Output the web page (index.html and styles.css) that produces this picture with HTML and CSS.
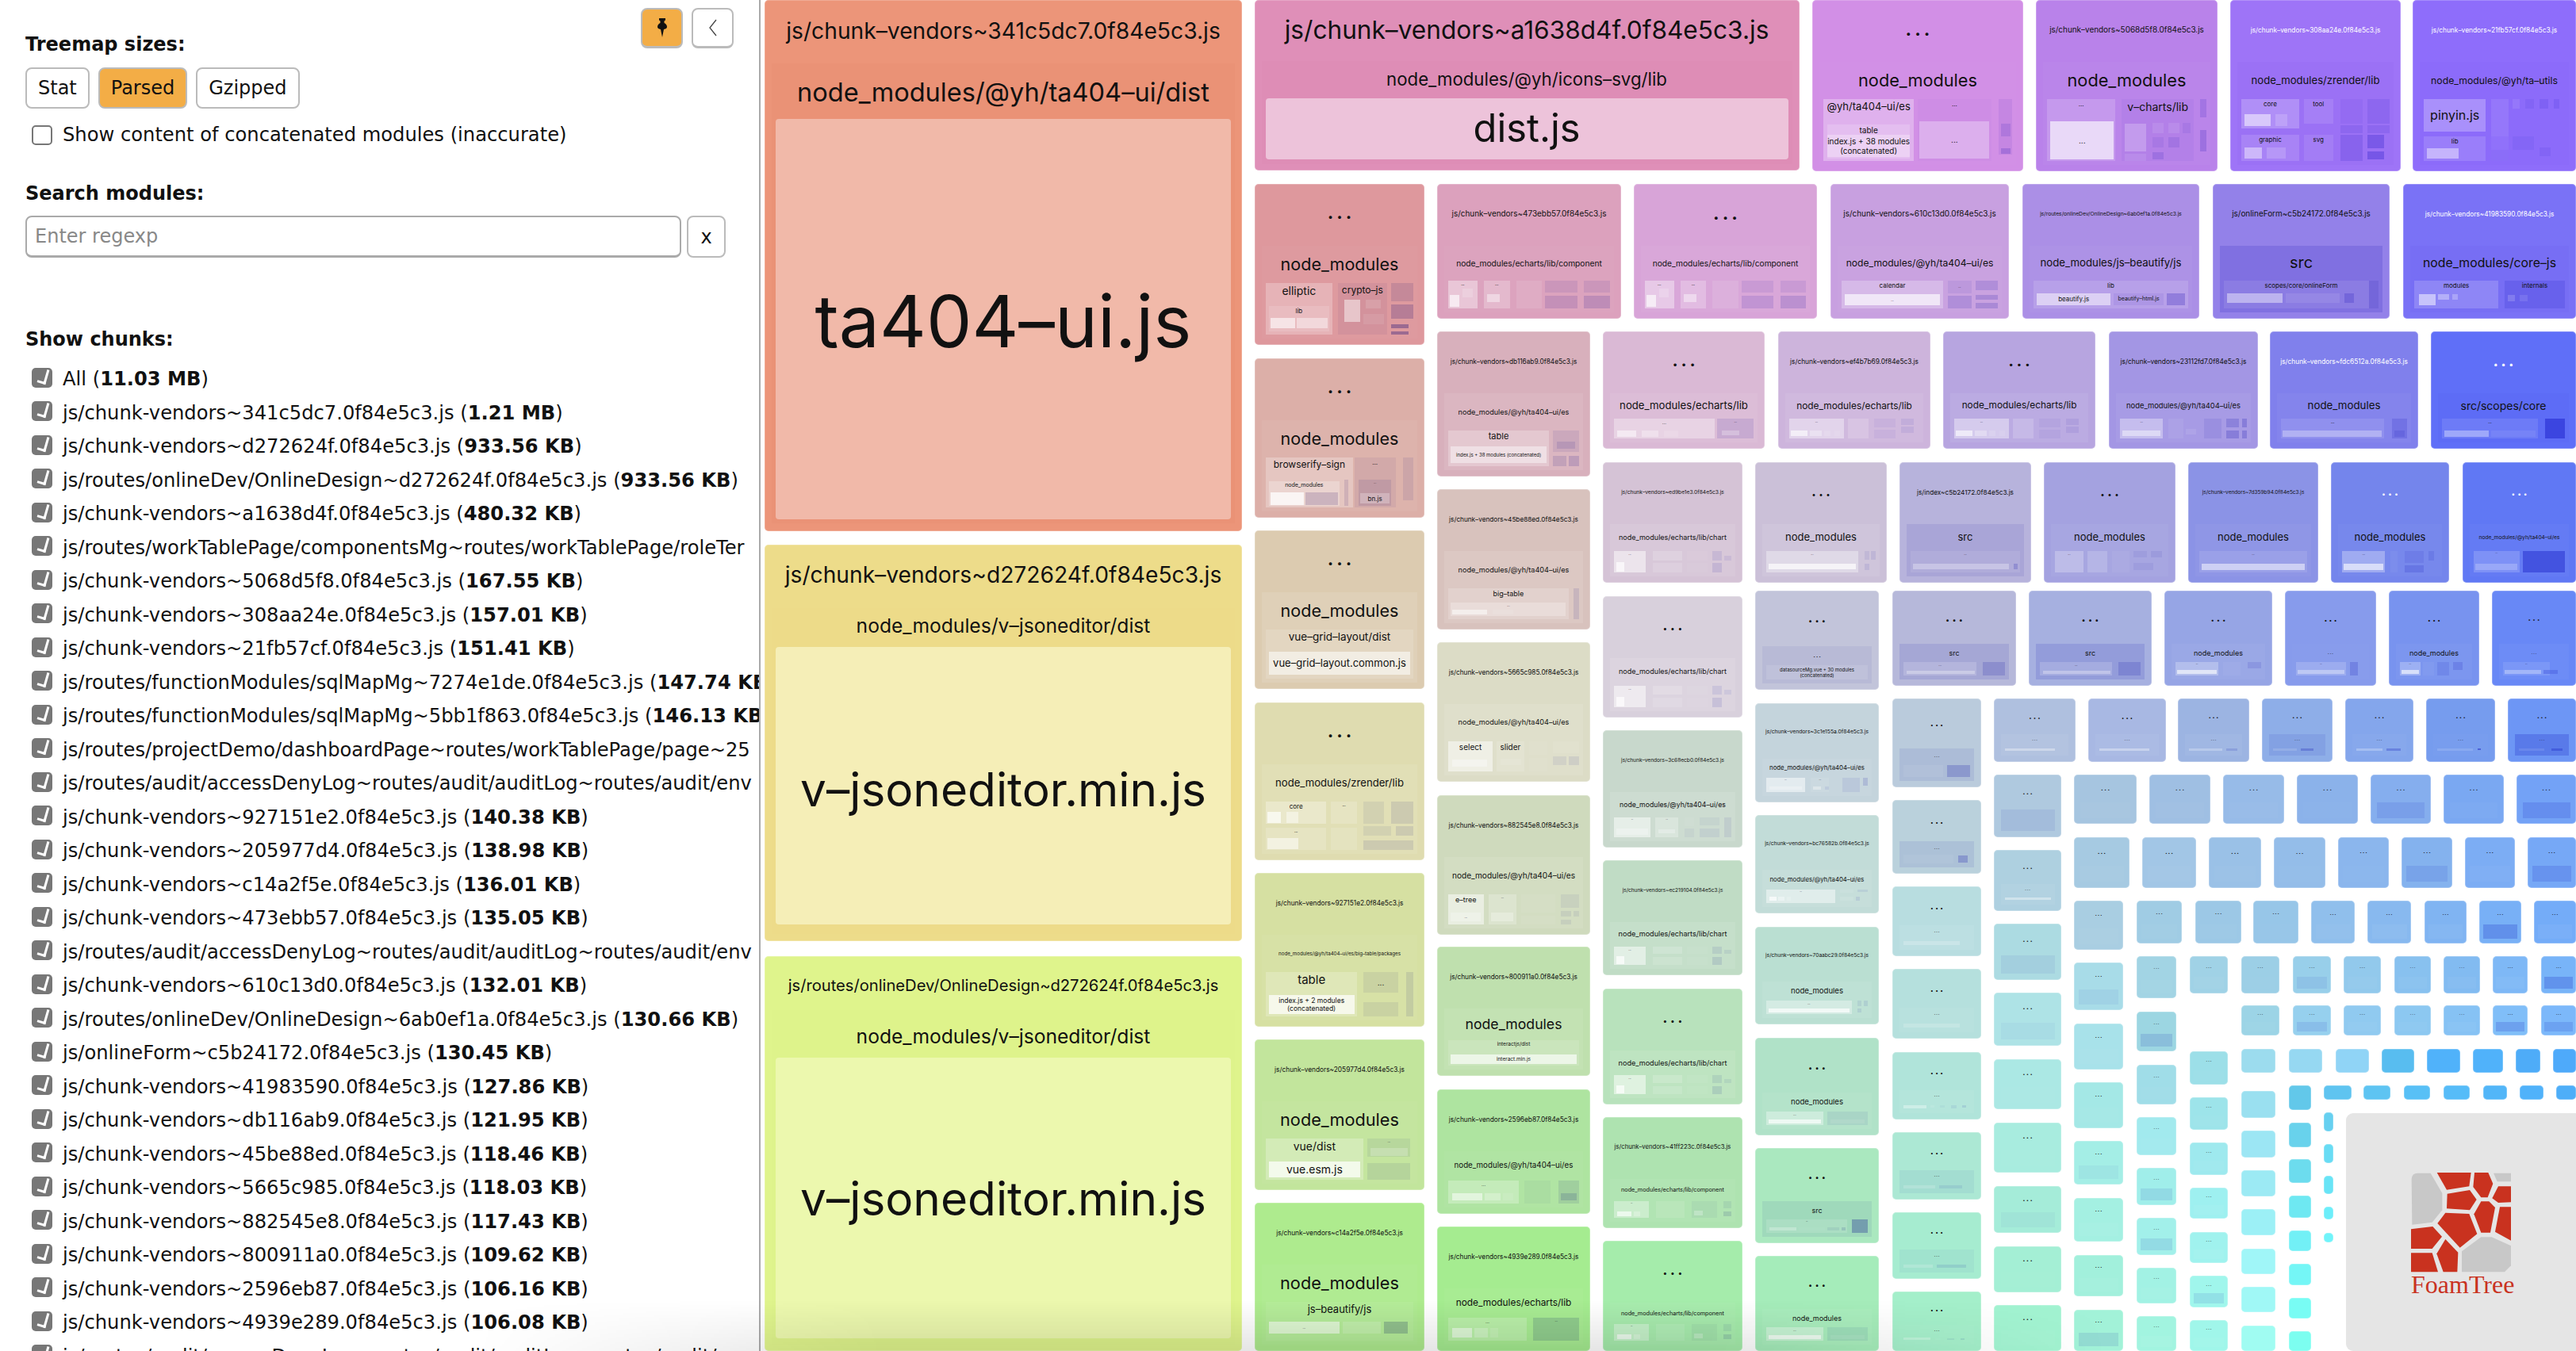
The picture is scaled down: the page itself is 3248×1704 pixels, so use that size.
FILE: index.html
```html
<!DOCTYPE html>
<html lang="en">
<head>
<meta charset="utf-8">
<title>Bundle treemap</title>
<link rel="stylesheet" href="styles.css">
</head>
<body>
<aside class="sidebar">
  <div class="pin-tools">
    <button class="tool active" aria-label="Pin">
      <svg width="18" height="26" viewBox="0 0 18 26"><path d="M5 1h8v2.500l-1.500 1V7c2 1 3.500 2.500 3.500 5 0 1.500-1.500 2.500-4 3l-2 10-2-10c-2.500-.5-4-1.500-4-3 0-2.500 1.500-4 3.500-5V4.500L5 3.500z" fill="#111"/></svg>
    </button>
    <button class="tool" aria-label="Collapse">
      <svg width="12" height="24" viewBox="0 0 12 24"><path d="M10 2 2 12l8 10" fill="none" stroke="#444" stroke-width="1.300"/></svg>
    </button>
  </div>
  <h2 class="heading first">Treemap sizes:</h2>
  <div class="switcher">
    <button class="pill">Stat</button>
    <button class="pill active">Parsed</button>
    <button class="pill">Gzipped</button>
  </div>
  <label class="concat"><input type="checkbox" class="check plain"><span>Show content of concatenated modules (inaccurate)</span></label>
  <h2 class="heading search-head">Search modules:</h2>
  <div class="search">
    <input class="search-input" type="text" placeholder="Enter regexp">
    <button class="clear">x</button>
  </div>
  <h2 class="heading chunks-head">Show chunks:</h2>
  <ul class="chunks">
    <li><label><input type="checkbox" class="check" checked><span>All (<b>11.03 MB</b>)</span></label></li>
    <li><label><input type="checkbox" class="check" checked><span>js/chunk-vendors~341c5dc7.0f84e5c3.js (<b>1.21 MB</b>)</span></label></li>
    <li><label><input type="checkbox" class="check" checked><span>js/chunk-vendors~d272624f.0f84e5c3.js (<b>933.56 KB</b>)</span></label></li>
    <li><label><input type="checkbox" class="check" checked><span>js/routes/onlineDev/OnlineDesign~d272624f.0f84e5c3.js (<b>933.56 KB</b>)</span></label></li>
    <li><label><input type="checkbox" class="check" checked><span>js/chunk-vendors~a1638d4f.0f84e5c3.js (<b>480.32 KB</b>)</span></label></li>
    <li><label><input type="checkbox" class="check" checked><span>js/routes/workTablePage/componentsMg~routes/workTablePage/roleTer</span></label></li>
    <li><label><input type="checkbox" class="check" checked><span>js/chunk-vendors~5068d5f8.0f84e5c3.js (<b>167.55 KB</b>)</span></label></li>
    <li><label><input type="checkbox" class="check" checked><span>js/chunk-vendors~308aa24e.0f84e5c3.js (<b>157.01 KB</b>)</span></label></li>
    <li><label><input type="checkbox" class="check" checked><span>js/chunk-vendors~21fb57cf.0f84e5c3.js (<b>151.41 KB</b>)</span></label></li>
    <li><label><input type="checkbox" class="check" checked><span>js/routes/functionModules/sqlMapMg~7274e1de.0f84e5c3.js (<b>147.74 KB</b>)</span></label></li>
    <li><label><input type="checkbox" class="check" checked><span>js/routes/functionModules/sqlMapMg~5bb1f863.0f84e5c3.js (<b>146.13 KB</b>)</span></label></li>
    <li><label><input type="checkbox" class="check" checked><span>js/routes/projectDemo/dashboardPage~routes/workTablePage/page~25</span></label></li>
    <li><label><input type="checkbox" class="check" checked><span>js/routes/audit/accessDenyLog~routes/audit/auditLog~routes/audit/env</span></label></li>
    <li><label><input type="checkbox" class="check" checked><span>js/chunk-vendors~927151e2.0f84e5c3.js (<b>140.38 KB</b>)</span></label></li>
    <li><label><input type="checkbox" class="check" checked><span>js/chunk-vendors~205977d4.0f84e5c3.js (<b>138.98 KB</b>)</span></label></li>
    <li><label><input type="checkbox" class="check" checked><span>js/chunk-vendors~c14a2f5e.0f84e5c3.js (<b>136.01 KB</b>)</span></label></li>
    <li><label><input type="checkbox" class="check" checked><span>js/chunk-vendors~473ebb57.0f84e5c3.js (<b>135.05 KB</b>)</span></label></li>
    <li><label><input type="checkbox" class="check" checked><span>js/routes/audit/accessDenyLog~routes/audit/auditLog~routes/audit/env</span></label></li>
    <li><label><input type="checkbox" class="check" checked><span>js/chunk-vendors~610c13d0.0f84e5c3.js (<b>132.01 KB</b>)</span></label></li>
    <li><label><input type="checkbox" class="check" checked><span>js/routes/onlineDev/OnlineDesign~6ab0ef1a.0f84e5c3.js (<b>130.66 KB</b>)</span></label></li>
    <li><label><input type="checkbox" class="check" checked><span>js/onlineForm~c5b24172.0f84e5c3.js (<b>130.45 KB</b>)</span></label></li>
    <li><label><input type="checkbox" class="check" checked><span>js/chunk-vendors~41983590.0f84e5c3.js (<b>127.86 KB</b>)</span></label></li>
    <li><label><input type="checkbox" class="check" checked><span>js/chunk-vendors~db116ab9.0f84e5c3.js (<b>121.95 KB</b>)</span></label></li>
    <li><label><input type="checkbox" class="check" checked><span>js/chunk-vendors~45be88ed.0f84e5c3.js (<b>118.46 KB</b>)</span></label></li>
    <li><label><input type="checkbox" class="check" checked><span>js/chunk-vendors~5665c985.0f84e5c3.js (<b>118.03 KB</b>)</span></label></li>
    <li><label><input type="checkbox" class="check" checked><span>js/chunk-vendors~882545e8.0f84e5c3.js (<b>117.43 KB</b>)</span></label></li>
    <li><label><input type="checkbox" class="check" checked><span>js/chunk-vendors~800911a0.0f84e5c3.js (<b>109.62 KB</b>)</span></label></li>
    <li><label><input type="checkbox" class="check" checked><span>js/chunk-vendors~2596eb87.0f84e5c3.js (<b>106.16 KB</b>)</span></label></li>
    <li><label><input type="checkbox" class="check" checked><span>js/chunk-vendors~4939e289.0f84e5c3.js (<b>106.08 KB</b>)</span></label></li>
    <li><label><input type="checkbox" class="check" checked><span>js/routes/audit/accessDenyLog~routes/audit/auditLog~routes/audit/</span></label></li>
  </ul>
</aside>
<main class="map" id="map">
  <div class="brand">
    <svg class="brand-logo" width="126" height="126" viewBox="360 238 378 378">
      <g class="foam-gray"><path d="M362 262q2-22 22-22h50l44 76v64l-38 46-76 9z"/><path d="M672 240h66v32h-52z"/><path d="M552 536l73-54h40l73 33v75l-24 24H552z"/></g>
      <g class="foam-red"><path d="M458 238h129l-7 52-85 13z"/><path d="M600 238h52l18 42-20 52h-25l-30-40z"/><path d="M690 290h48v60l-48 2-23-17z"/><path d="M497 318l85-14 26 36-26 40-87-6z"/><path d="M625 347h30l23 23-18 95h-35l-27-70z"/><path d="M696 368h42v127l-60-33z"/><path d="M490 390l90 4 30 76-65 52-85-92z"/><path d="M360 452l82-10 35 38-37 46h-80z"/><path d="M360 542h80l22 72H360z"/><path d="M490 490l48 50-3 74h-53l-25-69z"/></g>
    </svg>
    <span class="brand-name">FoamTree</span>
  </div>
</main>
<div class="page-fade"></div>
<script src="app.js"></script>
</body>
</html>
```
FILE: styles.css
```css
* { box-sizing: border-box; }
html, body { margin: 0; height: 1704px; overflow: hidden; background: #fff; }
body { display: flex; }

.sidebar {
  position: relative;
  flex: 0 0 959px;
  height: 1704px;
  padding: 0 0 0 32px;
  overflow: hidden;
  border-right: 2px solid #aaa;
  font-family: "DejaVu Sans", Verdana, sans-serif;
  font-size: 24.2px;
  color: #111;
}
.pin-tools { position: absolute; top: 10px; left: 808px; display: flex; gap: 11px; }
.tool {
  width: 53px; height: 51px; padding: 0;
  display: flex; align-items: center; justify-content: center;
  background: #fff; border: 2px solid #bbb; border-bottom-width: 3px; border-radius: 8px;
}
.tool.active { background: #f3ad46; }

.heading { margin: 0; font-size: 24px; line-height: 30px; font-weight: 700; }
.heading.first { margin-top: 41px; }
.search-head { margin-top: 42px; }
.chunks-head { margin-top: 88px; }

.switcher { display: flex; gap: 11px; margin-top: 14px; }
.pill {
  height: 52px; padding: 0 14px;
  font: 24px "DejaVu Sans", Verdana, sans-serif; color: #111;
  background: #fff; border: 2px solid #bbb; border-radius: 8px;
}
.pill.active { background: #f3ad46; }

.concat { display: flex; align-items: center; gap: 13px; height: 34px; margin: 16px 0 0 8px; white-space: nowrap; }

.check {
  position: relative; flex: none; width: 26px; height: 25px; margin: 0 0 4px;
  appearance: none; background: #777; border-radius: 5px;
}
.check:checked::after {
  content: ""; position: absolute; left: 9px; top: 1px; width: 8px; height: 16px;
  border: solid #fff; border-width: 0 3px 3px 0; transform: rotate(16deg);
}
.check.plain { background: #fff; border: 2px solid #777; margin: 0; }

.search { display: flex; gap: 7px; margin-top: 13px; }
.search-input {
  width: 827px; height: 53px; padding: 0 10px;
  font: 24px "DejaVu Sans", Verdana, sans-serif;
  border: 2px solid #aaa; border-bottom-width: 3px; border-radius: 8px; outline: none;
}
.search-input::placeholder { color: #888; }
.clear {
  width: 49px; height: 53px; padding: 0;
  font: 24px "DejaVu Sans", Verdana, sans-serif; color: #111;
  background: #fff; border: 2px solid #bbb; border-radius: 8px;
}

.chunks { list-style: none; margin: 14px 0 0; padding: 0 0 0 8px; }
.chunks li { height: 42.5px; white-space: nowrap; }
.chunks label { display: flex; align-items: center; gap: 13px; height: 100%; }

.map { position: relative; flex: 1; height: 1704px; overflow: hidden; font-family: Inter, "Liberation Sans", sans-serif; color: #111; }
.box { position: absolute; display: flex; align-items: center; justify-content: center; text-align: center; line-height: 1.25; white-space: pre-line; }
.box.top { align-items: flex-start; padding-top: 1px; }
.tile { border-radius: 5px; box-shadow: inset 0 0 0 1px rgba(255, 255, 255, .22); }
.leaf { border-radius: 4px; }
.lbl { position: absolute; white-space: nowrap; line-height: 1; transform: translate(-50%, -50%); }
.dots { font-weight: 900; letter-spacing: .24em; padding-left: .24em; }
.white { color: #fff; }

.brand {
  position: absolute; left: 1999px; top: 1404px; width: 290px; height: 300px;
  z-index: 5;
  display: flex; flex-direction: column; align-items: center; justify-content: center;
  padding-top: 6px;
  background: #e5e5e5; border-radius: 9px 0 0 9px;
}
.brand-logo { display: block; }
.brand-name { font: 32px/30px "Liberation Serif", serif; color: #c9321f; width: 126px; text-align: center; white-space: nowrap; }
.foam-gray { fill: #c8c8c8; }
.foam-red { fill: #c9321f; }

.page-fade {
  position: absolute; left: 600px; top: 1640px; width: 2060px; height: 64px;
  pointer-events: none;
  background: linear-gradient(to bottom, rgba(0,0,0,0), rgba(0,0,0,.1));
  -webkit-mask-image: linear-gradient(to right, transparent, #000 25%, #000 75%, transparent);
  mask-image: linear-gradient(to right, transparent, #000 25%, #000 75%, transparent);
}
```
FILE: app.js
```js
const map = document.getElementById('map');
const OX = 959;
const ctx = document.createElement('canvas').getContext('2d');
ctx.font = '100px Inter';
const fitSize = (s, w) => w / ctx.measureText(s).width * 100;

function rgb(c) { return [1, 3, 5].map(i => parseInt(c.substr(i, 2), 16)); }
function lum(c) {
  const [r, g, b] = rgb(c).map(v => { v /= 255; return v <= .04045 ? v / 12.92 : Math.pow((v + .055) / 1.055, 2.4); });
  return .2126 * r + .7152 * g + .0722 * b;
}
function shade(color, a) {
  if (a >= 0) return `rgba(255,255,255,${a * .85})`;
  const [r, g, b] = rgb(color);
  return `rgba(${r * .62 | 0},${g * .62 | 0},${b * .9 | 0},${Math.min(1, -a * 1.6)})`;
}
function box(x1, y1, x2, y2, bg, text, fs, cls) {
  const el = document.createElement('div');
  el.className = 'box ' + (cls || '');
  el.style.cssText = `left:${x1 - OX}px;top:${y1}px;width:${x2 - x1}px;height:${y2 - y1}px;background:${bg};` + (fs ? `font-size:${fs}px;` : '');
  if (text) el.textContent = text;
  map.appendChild(el);
  return el;
}
function label(cx, cy, text, fs, cls) {
  const el = document.createElement('div');
  el.className = 'lbl ' + (cls || '');
  el.style.cssText = `left:${cx - OX}px;top:${cy}px;font-size:${fs}px;`;
  el.textContent = text;
  map.appendChild(el);
}
function fitLabel(cx, cy, text, w, cls) { label(cx, cy, text, fitSize(text, w), cls); }

function tile(x1, y1, x2, y2, color, title, tw, sub, sw, ga, kids) {
  const w = x2 - x1, h = y2 - y1, cx = (x1 + x2) / 2;
  box(x1, y1, x2, y2, color, '', 0, 'tile');
  const light = lum(color) < .268;
  const titleY = y1 + Math.min(38, .29 * h);
  const dotFs = w * .088;
  if (title) fitLabel(cx, titleY, title, tw, light ? 'white' : '');
  else label(cx, titleY, '...', Math.min(dotFs, 19), 'dots' + (light ? ' white' : ''));
  const inset = Math.min(9, w * .1);
  const gTop = y1 + Math.min(78, .56 * h);
  const gBot = y2 - Math.min(8, .12 * h);
  box(x1 + inset, gTop, x2 - inset, gBot, shade(color, ga === undefined ? .05 : ga), '', 0);
  const kTop = gTop + Math.min(47, .52 * (gBot - gTop));
  const subY = gTop + (kTop - gTop) / 2;
  if (sub) fitLabel(cx, subY, sub, sw);
  else if (kids && h > 60) label(cx, subY, '...', Math.max(4, dotFs * .42), 'dots');
  if (kids) {
    const kx = x1 + inset + 5, kw = w - 2 * inset - 10, kb = gBot - 5, kh = kb - kTop;
    kids.forEach(([l, t, r, b, a, text, fs, top]) => {
      box(kx + kw * l / 100, kTop + kh * t / 100, kx + kw * r / 100, kTop + kh * b / 100, shade(color, a), text || '', fs, top ? 'top' : '');
    });
  }
}

const C = 'js/chunk–vendors~', H = '.0f84e5c3.js';
const NM = 'node_modules', UI = 'node_modules/@yh/ta404–ui/es', EL = 'node_modules/echarts/lib';
const P = {
  comp: [[0,0,18,100,.45,'...',5,1],[1,52,7,95,.75],[9,30,15,60,.2],[22,0,38,100,.28,'...',5,1],[24,50,32,78,.5],[42,0,58,100,.12],[60,0,80,42,-.12],[84,0,100,42,-.12],[60,56,80,100,-.18],[84,56,100,100,-.22]],
  chart: [[0,0,27,100,.6,'...',4,1],[2,52,9,95,.8],[33,0,58,42,.2],[33,56,58,100,.15],[62,0,80,42,.06],[62,56,80,100,.05],[84,0,92,42,-.12],[84,56,92,100,-.15],[94,20,100,42,-.1]],
  lib: [[0,0,42,100,.45,'...',4,1],[1,58,14,86,.7],[16,58,25,86,.35],[27,58,32,86,.15],[35,58,39,86,.1],[45,0,61,100,.2],[65,0,82,42,-.06],[65,56,82,100,-.06],[86,0,96,30,-.1],[86,40,96,70,-.1]],
  bar: [[0,0,74,100,.35,'...',4,1],[2,58,72,90,.7],[79,0,98,100,-.25]],
  bar2: [[0,0,56,100,.4,'...',4,1],[2,60,54,88,.78],[60,0,100,100,-.1],[63,60,97,86,.1]],
  wide: [[0,0,84,100,.4,'...',4,1],[2,58,82,86,.8],[90,0,94,40,-.1],[96,0,100,40,-.12],[90,60,94,90,-.12]],
  src: [[0,0,72,100,.2,'...',4,1],[3,62,70,85,.35],[78,0,100,100,-.3]],
  few: [[0,0,52,100,.3,'...',4,1],[3,58,30,90,.5],[32,58,50,90,.2],[58,0,78,100,-.06],[84,0,100,100,-.2]]
};

[
  // row 1
  [2285,0,2551,216,'#d28fe6',null,0,NM,150,.02,[[0,0,48,100,.35,'@yh/ta404–ui/es',13,1],[2,41,46,96,.2,'table',10,1],[2,58,46,94,.35,'index.js + 38 modules\n(concatenated)',10],[50,0,89,100,-.03,'...',8,1],[51,36,88,96,.35,'...',10],[93,0,100,90,-.1],[94,40,99,60,-.2],[94,80,99,88,-.3]]],
  [2567,0,2796,216,'#b982ea',C+'5068d5f8'+H,195,NM,150,.03,[[0,0,43,100,.2,'...',8,1],[2,36,42,98,.74,'...',10],[47,0,92,100,-.06,'v–charts/lib',14,1],[49,40,62,85,.25],[66,38,73,55,.1],[76,38,83,55,.1],[85,38,90,55,-.1],[66,62,73,78,-.1],[76,62,83,78,-.15],[49,88,62,100,.1],[66,86,73,98,-.2],[96,0,100,30,-.2],[96,50,100,85,-.25]]],
  [2812,0,3027,216,'#9e74f7',C+'308aa24e'+H,164,'node_modules/zrender/lib',162,-.03,[[0,0,39,48,.25,'core',8,1],[2,24,20,44,.6],[23,24,31,44,.2],[0,58,39,100,.15,'graphic',8,1],[2,78,14,96,.5],[17,78,30,96,.2],[42,0,62,40,.12,'tool',8,1],[42,58,62,100,.1,'svg',8,1],[67,0,82,40,-.08],[85,0,100,40,-.15],[67,42,82,55,-.15],[85,42,100,55,-.15],[67,58,82,100,-.2],[85,58,96,80,-.35],[85,85,96,98,-.4]]],
  [3042,0,3248,216,'#8e6dfb',C+'21fb57cf'+H,159,'node_modules/@yh/ta–utils',160,-.02,[[0,0,44,52,.3,'pinyin.js',16],[0,60,44,100,.15,'lib',8,1],[2,80,25,96,.5],[48,0,60,60,.1],[63,0,68,15,.1],[72,0,78,15,-.1],[82,0,88,15,-.15],[92,0,96,15,-.15],[48,60,60,100,.05],[63,60,78,82,-.08],[82,78,90,92,-.1],[48,82,60,100,-.05]]],
  // row 2
  [1812,232,2044,402,'#dca1bd',C+'473ebb57'+H,195,EL+'/component',184,.03,P.comp],
  [2060,232,2291,402,'#d8a4d8',null,0,EL+'/component',184,.04,P.comp],
  [2308,232,2533,402,'#c8a0e0',C+'610c13d0'+H,193,UI,186,.03,[[0,0,65,100,.3,'calendar',8,1],[2,50,63,88,.75,'...',4],[68,0,83,45,-.1,'...',4],[68,55,83,100,-.2],[86,0,100,35,-.2],[86,52,100,70,-.25],[86,80,100,100,-.25]]],
  [2550,232,2773,402,'#ab8fe6','js/routes/onlineDev/OnlineDesign~6ab0ef1a'+H,179,'node_modules/js–beautify/js',178,.03,[[0,0,100,100,.15,'lib',8,1],[2,45,50,88,.6,'beautify.js',8],[52,45,84,88,-.08,'beautify–html.js',7],[86,45,98,88,-.3]]],
  [2790,232,3013,402,'#9381e9','js/onlineForm~c5b24172'+H,175,'src',29,-.2,[[0,0,100,100,.1,'scopes/core/onlineForm',8,1],[2,45,38,80,.5],[40,45,75,80,.1],[78,45,84,80,-.3],[94,0,100,100,-.3]]],
  [3030,232,3248,402,'#7a72f6',C+'41983590'+H,163,'node_modules/core–js',168,-.04,[[0,0,56,100,.2,'modules',8,1],[3,50,14,90,.6],[16,50,23,70,.4],[25,50,29,70,.3],[60,0,100,100,-.2,'internals',8,1],[62,52,67,75,.2],[70,52,75,75,.12]]],
  // col A below
  [1582,232,1796,435,'#de989d',null,0,NM,149,.03,[[0,0,45,100,.3,'elliptic',14,1],[2,44,43,94,.15,'lib',8,1],[3,68,20,88,.7],[21,68,42,88,.5],[49,0,82,100,-.08,'crypto–js',12,1],[53,32,64,76,.55],[68,32,78,50,.15],[66,60,80,80,.1],[85,0,100,35,-.18],[85,42,100,70,-.3],[85,80,97,88,-.5],[85,94,97,100,-.5]]],
  [1582,452,1796,653,'#dcafa8',null,0,NM,149,.06,[[0,0,59,100,.3,'browserify–sign',12,1],[2,47,50,97,.3,'node_modules',7,1],[3,70,26,95,.9],[27,70,49,95,-.2],[53,45,56,97,-.15],[60,0,88,100,-.08,'...',8,1],[63,45,85,97,-.15,'...',4,1],[64,72,84,92,.3,'bn.js',8],[93,0,100,85,-.12]]],
  [1582,669,1796,869,'#dccbb0',null,0,NM,149,.12,[[0,0,100,100,.15,'vue–grid–layout/dist',13.500,1],[2,45,98,92,.65,'vue–grid–layout.common.js',13]]],
  [1582,886,1796,1085,'#dfdcb0',null,0,'node_modules/zrender/lib',162,.1,[[0,0,41,46,.35,'core',8,1],[1,22,10,44,.8],[14,22,22,44,.5],[44,0,62,46,.2,'...',5,1],[66,0,80,46,-.1],[85,0,100,46,-.15],[0,54,41,100,.2,'...',5,1],[1,75,22,98,.6],[44,54,62,100,.15],[66,50,85,70,-.1],[88,50,100,70,-.15],[66,80,100,100,-.15]]],
  [1582,1101,1796,1295,'#d6e0a2',C+'927151e2'+H,161,'node_modules/@yh/ta404–ui/es/big–table/packages',154,.05,[[0,0,62,100,.25,'table',15,1],[2,52,60,95,.85,'index.js + 2 modules\n(concatenated)',8.500],[66,0,90,47,-.1,'...',10],[66,67,90,100,-.1],[95,0,100,100,-.15]]],
  [1582,1311,1796,1501,'#c2e59c',C+'205977d4'+H,164,NM,150,.04,[[0,0,66,100,.3,'vue/dist',14,1],[2,55,64,95,.85,'vue.esm.js',14],[69,0,98,45,-.1,'...',4,1],[71,24,96,42,.25],[69,60,98,100,-.12]]],
  [1582,1517,1796,1704,'#aeeb8e',C+'c14a2f5e'+H,160,NM,150,.04,[[0,0,100,100,.08,'js–beautify/js',13,1],[2,50,50,82,.65,'...',4],[52,50,78,82,.2],[80,50,96,82,-.3]]],
  // col B below
  [1812,418,2005,601,'#d8b0bc',C+'db116ab9'+H,160,UI,140,.1,[[0,0,77,100,.3,'table',11,1],[2,45,75,90,.5,'index.js + 38 modules (concatenated)',6],[80,0,100,60,-.12],[83,30,97,50,-.18],[80,70,90,100,-.18],[92,70,100,100,-.22]]],
  [1812,617,2005,794,'#d8c2bd',C+'45be88ed'+H,163,UI,140,.12,[[0,0,92,100,.2,'big–table',9,1],[2,45,90,90,.3,'...',4,1],[3,68,30,84,.6],[34,68,50,84,.1],[96,0,100,100,-.15]]],
  [1812,810,2005,986,'#dcdcc6',C+'5665c985'+H,164,UI,140,.12,[[0,0,34,100,.6,'select',10,1],[3,60,30,85,.4],[37,0,58,100,.15,'slider',10,1],[40,58,56,80,.1],[62,0,76,45,.06],[62,55,76,100,.05],[80,0,100,40,.08],[80,50,90,80,-.1],[92,50,100,80,-.12]]],
  [1812,1003,2005,1179,'#cfdabd',C+'882545e8'+H,164,UI,155,.1,[[0,0,27,100,.6,'e–tree',9,1],[2,60,25,90,.3,'...',4],[31,0,52,100,.25,'...',4,1],[33,60,50,90,.3],[56,0,82,60,.06],[56,72,82,100,.06],[86,0,100,45,-.08],[86,55,94,75,-.1],[96,55,100,75,-.1],[86,85,94,100,-.1]]],
  [1812,1194,2005,1357,'#bfe0ae',C+'800911a0'+H,161,NM,122,.08,[[0,0,100,100,.15,'interactjs/dist',6.500,1],[2,55,98,95,.75,'interact.min.js',6.500]]],
  [1812,1374,2005,1531,'#aee4a0',C+'2596eb87'+H,164,UI,150,.04,[[0,0,54,100,.3,'...',6,1],[3,55,26,85,.6],[28,55,40,85,.3],[42,55,50,85,.1],[58,0,78,100,-.05],[84,0,100,100,-.15],[86,55,98,85,-.25]]],
  [1812,1547,2005,1704,'#a5ec90',C+'4939e289'+H,164,EL,146,.04,[[0,0,60,100,.25,'...',6,1],[3,45,18,85,.6],[20,45,30,85,.3],[32,45,38,85,.15],[65,0,100,100,-.22,'...',4,1]]],
  // row 3
  [2021,418,2225,566,'#dab9d5',null,0,EL,162,.08,[[0,0,72,100,.4,'...',6,1],[2,60,16,90,.6],[20,60,32,90,.35],[36,60,46,90,.15],[74,0,100,100,-.15,'...',4,1],[77,60,90,85,.3]]],
  [2242,418,2434,566,'#cdb4dc',C+'ef4b7b69'+H,162,EL,146,.08,P.lib],
  [2450,418,2642,566,'#b7a5e0',null,0,EL,145,.08,P.lib],
  [2659,418,2847,566,'#a396e4',C+'23112fd7'+H,159,UI,144,.06,[[0,0,34,100,.4,'...',4,1],[2,60,32,88,.5],[38,0,50,100,.08],[52,50,60,80,.1],[66,0,80,100,-.12],[84,0,94,45,-.25],[96,0,100,45,-.3],[84,60,94,100,-.3],[96,60,100,100,-.3]]],
  [2862,418,3049,566,'#8080ec',C+'fdc6512a'+H,161,NM,92,.04,[[0,0,82,100,.12,'...',5,1],[1,60,80,92,.35],[88,0,100,100,-.2],[90,58,98,92,-.2]]],
  [3065,418,3248,566,'#5f6ff8',null,0,'src/scopes/core',108,-.04,[[0,0,78,100,.12,'...',5,1],[2,60,38,90,.4],[40,60,76,90,.08],[84,0,100,100,-.6]]],
  // row 4 starting at x 2021
  [2021,583,2197,735,'#d5c3d6',C+'ed9be1e3'+H,130,EL+'/chart',136,.1,P.chart],
  [2213,583,2379,735,'#cbc0d8',null,0,NM,90,.1,P.wide],
  [2395,583,2561,735,'#b7b3dc','js/index~c5b24172'+H,122,'src',19,-.12,[[0,0,100,100,.1,'...',4,1],[2,58,90,85,.35],[94,58,98,85,-.3]]],
  [2577,583,2743,735,'#a4a2e0',null,0,NM,90,.05,[[0,0,26,100,.3,'...',4,1],[30,0,48,100,.2],[52,0,68,100,.06],[72,0,84,30,-.08],[88,0,98,30,-.1],[72,55,90,90,-.08]]],
  [2759,583,2923,735,'#8b93e6',C+'7d359b94'+H,129,NM,90,.04,[[0,0,100,100,.12,'...',4,1],[2,58,98,88,.6]]],
  [2939,583,3088,735,'#7485ec',null,0,NM,90,.03,[[0,0,45,100,.35,'...',4,1],[2,60,43,90,.7],[50,0,58,100,.05],[65,0,85,55,-.12],[90,0,96,45,-.15],[65,65,85,100,-.2]]],
  [3105,583,3248,735,'#6078f4',null,0,'node_modules/@yh/ta404–ui/es',102,.03,[[0,0,50,100,.2,'...',3,1],[2,58,48,88,.25],[54,0,100,100,-.5]]],
  // col 3 below
  [2021,752,2197,905,'#d8d0dc',null,0,EL+'/chart',136,.12,P.chart],
  [2021,921,2197,1069,'#c8d8cc',C+'3c68ecb0'+H,130,UI,134,.12,[[0,0,31,100,.6,'...',3,1],[2,55,29,88,.3],[35,0,55,100,.3,'...',3,1],[38,60,52,80,.3],[60,0,68,45,.06],[60,55,68,100,-.05],[73,0,90,40,-.06],[73,55,90,100,-.08],[94,0,100,100,-.1]]],
  [2021,1085,2197,1230,'#c0dcc5',C+'ec219104'+H,127,EL+'/chart',137,.1,P.chart],
  [2021,1247,2197,1393,'#b8e2bc',null,0,EL+'/chart',137,.1,P.chart],
  [2021,1409,2197,1549,'#aee3b0',C+'41ff223c'+H,147,EL+'/component',130,.05,[[0,0,30,100,.4,'...',3,1],[3,60,15,90,.75],[17,60,22,90,.3],[36,0,60,100,.12],[66,0,88,100,-.06],[68,55,76,85,.3],[93,0,100,42,-.1],[93,60,100,90,-.18]]],
  [2021,1565,2197,1704,'#a5ecab',null,0,EL+'/component',130,.05,[[0,0,30,100,.4,'...',3,1],[3,60,15,90,.75],[17,60,22,90,.3],[36,0,60,100,.12],[66,0,88,100,-.06],[68,55,76,85,.3],[93,0,100,42,-.1],[93,60,100,90,-.18]]],
  // col 4 (2213)
  [2213,887,2369,1012,'#c4d4dc',C+'3c1e155a'+H,130,UI,120,.08,[[0,0,38,100,.6,'...',3,1],[3,60,35,85,.3],[44,0,62,100,.1,'...',3,1],[46,60,54,85,.4],[58,60,62,85,-.1],[75,0,92,100,-.1],[95,0,100,55,-.2]]],
  [2213,1028,2369,1152,'#c2dcd8',C+'bc76582b'+H,132,UI,119,.08,[[0,0,68,100,.55,'...',3,1],[3,55,10,85,.8],[12,55,18,85,.4],[20,55,24,85,.2],[73,55,86,85,.12],[73,0,86,25,.1],[90,0,100,20,-.1],[88,55,92,85,-.12]]],
  [2213,1169,2369,1292,'#badfd2',C+'70aabc29'+H,130,NM,66,.08,P.wide],
  [2213,1309,2369,1432,'#b0e2c8',null,0,NM,66,.06,P.bar2],
  [2213,1448,2369,1568,'#aae8bf',null,0,'src',13,-.1,[[0,0,80,100,.15,'...',3,1],[3,58,30,82,.3],[32,58,58,82,.04],[60,58,72,82,-.1],[74,58,78,82,-.2],[84,0,100,100,-.5]]],
  [2213,1584,2369,1704,'#a5ecba',null,0,NM,62,.06,P.bar2],
  // row 5
  [2386,745,2542,865,'#b6b8da',null,0,'src',13,-.15,P.src],
  [2558,745,2713,865,'#a6b0e0',null,0,'src',13,-.18,P.src],
  [2729,745,2865,865,'#96a5e5',null,0,NM,62,.05,[[0,0,50,100,.3,'...',3,1],[2,58,48,88,.7],[56,0,76,100,.05],[84,0,100,45,-.15]]],
  [2881,745,2996,865,'#879bec',null,0,null,0,.02,[[0,0,72,100,.2,'...',3,1],[2,58,70,88,.4],[78,0,90,100,-.25]]],
  [3012,745,3126,865,'#7893ef',null,0,NM,62,.04,[[0,0,30,100,.3,'...',3,1],[2,60,28,90,.7],[34,0,50,100,.05],[55,0,72,100,-.15],[78,0,92,55,-.2]]],
  [3142,745,3248,865,'#6888f6',null,0,null,0,.04,[[0,0,75,100,.12,'...',3,1],[2,58,62,85,.35],[66,58,88,85,-.25]]],
  // datasource
  [2213,745,2369,870,'#c2c4da',null,0,null,0,-.08,[[0,0,100,100,.12,'datasourceMg.vue + 30 modules\n(concatenated)',6]]]
].forEach(d => tile(...d));

// rows and columns of small tiles: [a, b, colour, group alpha, kids]
function row(y1, y2, list) { list.forEach(([a, b, c, g, k]) => tile(a, y1, b, y2, c, null, 0, null, 0, g, k)); }
function col(x1, x2, list) { list.forEach(([a, b, c, g, k]) => tile(x1, a, x2, b, c, null, 0, null, 0, g, k)); }

col(2386, 2498, [
  [881, 993, '#bacbdc', -.12, [[0,0,60,100,.08],[66,0,100,100,-.35]]],
  [1009, 1102, '#bad1dc', -.12, [[0,0,75,100,.06],[82,10,96,90,-.4]]],
  [1118, 1206, '#b8dde0', .08, [[0,40,84,90,.25]]],
  [1222, 1310, '#b5e0dd', .06, [[0,40,84,90,.2]]],
  [1327, 1412, '#b0e4da', .06, [[0,45,34,90,.4],[40,50,46,80,.1],[55,50,62,80,-.05],[72,45,80,90,-.1],[88,45,94,80,-.15]]],
  [1428, 1513, '#ace8d4', -.08, [[0,40,48,85,.2],[54,40,88,85,-.12]]],
  [1529, 1613, '#a6ecd0', -.06, [[0,40,44,85,.2],[50,40,94,85,-.15]]],
  [1629, 1704, '#a4efca', .03, [[0,45,40,80,.3],[48,50,56,80,.05],[66,50,76,80,-.1],[86,50,92,80,-.15]]]
]);
row(881, 961, [
  [2514, 2617, '#afc0df', .06, [[0,45,84,90,.4]]],
  [2633, 2731, '#a8b8e3', .05, [[0,45,90,90,.4]]],
  [2746, 2836, '#9cb4e2', .05, [[0,45,68,90,.3],[76,45,98,90,-.2]]],
  [2852, 2941, '#8eaee8', -.12, [[0,45,50,90,.15],[58,45,84,90,-.4]]],
  [2957, 3043, '#84a6ec', .03, [[0,45,56,90,.3],[66,45,96,90,-.35]]],
  [3059, 3146, '#769cee', .02, [[0,45,76,90,.15],[86,50,92,80,-.6]]],
  [3162, 3248, '#6d96f5', -.3, [[0,45,55,90,.12],[70,45,95,90,-.6]]]
]);
col(2514, 2599, [
  [977, 1056, '#afc9df', -.1],
  [1072, 1149, '#aed0e0', .06, [[0,50,100,90,.45]]],
  [1165, 1236, '#acdbe2', -.08],
  [1252, 1319, '#aee3e6', -.05],
  [1336, 1399, '#abe8e4', .02],
  [1416, 1479, '#a8ecdf', .02],
  [1496, 1555, '#a5ecd9', -.05],
  [1572, 1630, '#a4efd5', .02],
  [1646, 1704, '#a2f3d1', .03]
]);
row(977, 1039, [[2615,2694,'#a6c5e0',.03],[2710,2787,'#9fbfe3',.03],[2803,2880,'#97bbe8',.03],[2896,2973,'#8bb2ea',.02],[2989,3065,'#85aeee',-.14],[3081,3157,'#7aa8f2',.03],[3173,3248,'#73a2f6',-.2]]);
row(1056, 1120, [[2615,2685,'#a6cae2',.03],[2701,2769,'#a2c6e6',.03],[2785,2851,'#9ac1e7',.03],[2867,2932,'#94bde9',.02],[2948,3012,'#8bb6ed',.02],[3028,3092,'#84b2ee',-.14],[3108,3171,'#7cadf4',.04],[3187,3248,'#76a8f6',-.2]]);
row(1136, 1190, [[2694,2751,'#a0cce4',.03],[2768,2826,'#9cc8e6',.03],[2841,2898,'#97c6e8',.02],[2914,2969,'#90bfec',.03],[2985,3040,'#88b9ef',.05],[3057,3110,'#80b4f2',.05],[3126,3179,'#78b0f6',-.3],[3195,3248,'#74acf8',.05]]);
row(1206, 1253, [[2761,2809,'#a0d2e6',.04],[2826,2874,'#9ccfe6',.02],[2891,2939,'#98cfea',-.1],[2955,3002,'#92c9ec',.04],[3019,3065,'#88c1ef',.04],[3081,3127,'#82bbf1',.05],[3143,3187,'#7eb8f6',.05],[3204,3248,'#78b4f8',-.3]]);
row(1268, 1306, [[2826,2874,'#9cd4e6',.03],[2891,2939,'#96d0ee',-.14],[2955,3002,'#90caf0',.03],[3019,3065,'#8cc8f1',.03],[3081,3127,'#86c2f4',.04],[3143,3187,'#80bef8',-.25],[3204,3248,'#7cb8fa',-.2]]);
[
  [2826,1323,2869,1353,'#9cdcee'],[2886,1323,2928,1353,'#96d8f2'],[2945,1323,2987,1353,'#90d4f6'],[3003,1323,3044,1353,'#58bdf0'],[3060,1323,3102,1353,'#50b2fa'],[3118,1323,3156,1353,'#50b2fa'],[3172,1323,3203,1353,'#4eacf8'],[3219,1323,3248,1353,'#4eaafa'],
  [2930,1369,2965,1387,'#5fc4f0'],[2980,1369,3014,1387,'#5ec4f2'],[3031,1369,3064,1387,'#58c0f6'],[3081,1369,3114,1387,'#56bcf8'],[3131,1369,3161,1387,'#52b6f8'],[3177,1369,3207,1387,'#50b2fa'],[3223,1369,3248,1387,'#4eaef8'],
  [2930,1403,2942,1427,'#66d0f0'],[2930,1443,2942,1467,'#68dcf4'],[2930,1483,2942,1506,'#68e4f6'],[2930,1522,2942,1538,'#6ceefa'],[2930,1555,2942,1567,'#70f4fa'],
  [2886,1369,2914,1400,'#62c8ea'],[2886,1416,2914,1447,'#68d2ec'],[2886,1462,2914,1492,'#6cdcee'],[2886,1508,2914,1536,'#6ee8f2'],[2886,1552,2914,1578,'#72f0f6'],[2886,1594,2914,1621,'#74f6f6'],[2886,1637,2914,1663,'#78fcf4'],[2886,1679,2914,1704,'#7cfef0'],
  [2826,1376,2869,1410,'#9ae0f0'],[2826,1426,2869,1460,'#9ce6f4'],[2826,1476,2869,1509,'#9ceaf4'],[2826,1525,2869,1558,'#9cf0f6'],[2826,1575,2869,1607,'#a0f6f8'],[2826,1623,2869,1655,'#a0f8f6'],[2826,1672,2869,1704,'#a0fcf2']
].forEach(([a, b, c, d, col]) => box(a, b, c, d, col, '', 0, 'tile'));
col(2761, 2809, [[1326,1368,'#9cdfe8',.03],[1384,1425,'#9de4ea',.03],[1441,1482,'#9ee9ee',.04],[1498,1537,'#9ef0f0',.05],[1554,1593,'#a0f2ee',.05],[1609,1649,'#a0f6ec',-.14],[1665,1704,'#a0f6ea',.04]]);
col(2694, 2744, [[1206,1259,'#a2d4e4',.03],[1276,1326,'#9cd6e2',-.18],[1343,1393,'#a0dde8',.03],[1409,1457,'#a2eaee',.03],[1473,1520,'#a0eeea',-.14],[1536,1583,'#a2f0ea',-.14],[1599,1644,'#a2f2e4',.04],[1660,1704,'#a2f4e0',.05]]);
col(2615, 2677, [[1136,1198,'#a9cee2',.03],[1214,1274,'#a8dce8',-.07],[1291,1349,'#a8e2ea',.03],[1365,1423,'#a4e8e6',.03],[1439,1494,'#a4eee6',-.06],[1511,1566,'#a4f0e2',.04],[1583,1635,'#a2f0dc',.04],[1652,1704,'#a2f2d8',-.15]]);

// the four largest chunks
box(964, 0, 1566, 670, '#ec9579', '', 0, 'tile');
box(973, 80, 1557, 660, '#ea9276', '', 0);
box(978, 150, 1552, 655, '#f1b9a9', '', 0, 'leaf');
fitLabel(1265, 39, C + '341c5dc7' + H, 548);
fitLabel(1265, 116, 'node_modules/@yh/ta404–ui/dist', 520);
fitLabel(1265, 406, 'ta404–ui.js', 475);

box(964, 687, 1566, 1187, '#eddc8a', '', 0, 'tile');
box(973, 767, 1557, 1178, '#eddb89', '', 0);
box(978, 816, 1552, 1166, '#f5eeb7', '', 0, 'leaf');
fitLabel(1265, 725, C + 'd272624f' + H, 551);
fitLabel(1265, 789, 'node_modules/v–jsoneditor/dist', 371);
fitLabel(1265, 996, 'v–jsoneditor.min.js', 512);

box(964, 1206, 1566, 1704, '#dff48c', '', 0, 'tile');
box(973, 1274, 1557, 1696, '#def38b', '', 0);
box(978, 1334, 1552, 1688, '#ecf8ae', '', 0, 'leaf');
fitLabel(1265, 1243, 'js/routes/onlineDev/OnlineDesign~d272624f' + H, 543);
fitLabel(1265, 1307, 'node_modules/v–jsoneditor/dist', 371);
fitLabel(1265, 1512, 'v–jsoneditor.min.js', 512);

box(1582, 0, 2269, 215, '#df8fb8', '', 0, 'tile');
box(1591, 77, 2260, 207, '#de8db6', '', 0);
box(1596, 124, 2255, 201, '#edc3da', '', 0, 'leaf');
fitLabel(1925, 38, C + 'a1638d4f' + H, 611);
fitLabel(1925, 100, 'node_modules/@yh/icons–svg/lib', 354);
fitLabel(1925, 162, 'dist.js', 135);
```
